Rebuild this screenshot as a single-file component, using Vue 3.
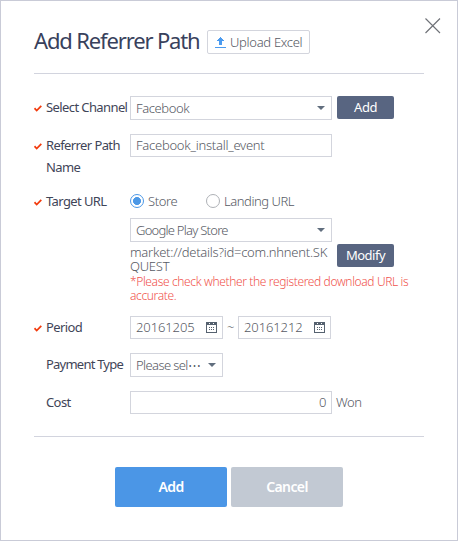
<script setup>
import { ref } from 'vue'

const targetType = ref('store')
const dates = ['20161205', '20161212']
const calendarDots = [5, 7].flatMap((y) => [3, 5, 7].map((x) => ({ x, y })))
</script>

<template>
  <section class="dialog">
    <button class="close" aria-label="Close">
      <svg width="16" height="16" viewBox="0 0 16 16"><path d="M.5.5l14.5 14.5M15 .5L.5 15" fill="none" stroke="#6f7278" stroke-width="1.15" /></svg>
    </button>

    <header class="head">
      <h1>Add Referrer Path</h1>
      <button class="upload">
        <svg width="11" height="11" viewBox="0 0 11 11" shape-rendering="crispEdges" fill="#4c9bef">
          <path d="M5 0h1v1h1v1h1v1h1v1H7v4H4V4H2V3h1V2h1V1h1z" />
          <path d="M0 10h11v1H0z" />
        </svg>
        <span>Upload Excel</span>
      </button>
    </header>

    <form class="form" @submit.prevent>
      <div class="row channel">
        <div class="label required">
          <svg class="check" width="8" height="7" viewBox="0 0 8 7"><path d="M.5 3.2L2.7 5.5 7.3.8" /></svg>
          <span>Select Channel</span>
        </div>
        <div class="select wide"><span>Facebook</span><i class="caret"></i></div>
        <button class="small">Add</button>
      </div>

      <div class="row path">
        <div class="label required">
          <svg class="check" width="8" height="7" viewBox="0 0 8 7"><path d="M.5 3.2L2.7 5.5 7.3.8" /></svg>
          <span>Referrer Path<br>Name</span>
        </div>
        <div class="input wide underscored"><span>Facebook_install_event</span></div>
      </div>

      <div class="row target">
        <div class="label required">
          <svg class="check" width="8" height="7" viewBox="0 0 8 7"><path d="M.5 3.2L2.7 5.5 7.3.8" /></svg>
          <span>Target URL</span>
        </div>
        <div class="target-body">
          <div class="radios">
            <label class="radio" :class="{ on: targetType === 'store' }" @click="targetType = 'store'"><i></i><span>Store</span></label>
            <label class="radio landing" :class="{ on: targetType === 'landing' }" @click="targetType = 'landing'"><i></i><span>Landing URL</span></label>
          </div>
          <div class="select wide store"><span>Google Play Store</span><i class="caret"></i></div>
          <div class="url-line">
            <p class="url">market://details?id=com.nhnent.SK<br>QUEST</p>
            <button class="small modify">Modify</button>
          </div>
          <p class="warning">*Please check whether the registered download URL is<br>accurate.</p>
        </div>
      </div>

      <div class="row period">
        <div class="label required">
          <svg class="check" width="8" height="7" viewBox="0 0 8 7"><path d="M.5 3.2L2.7 5.5 7.3.8" /></svg>
          <span>Period</span>
        </div>
        <div class="dates">
          <template v-for="(date, i) in dates" :key="date">
            <span v-if="i" class="tilde">~</span>
            <div class="input date">
              <span>{{ date }}</span>
              <svg width="11" height="11" viewBox="0 0 11 11" shape-rendering="crispEdges" fill="#566270">
                <path fill-rule="evenodd" d="M0 0h11v11H0zM1 3v7h9V3zM3 1v1h1V1zM7 1v1h1V1z" />
                <rect v-for="dot in calendarDots" :key="`${dot.x}-${dot.y}`" :x="dot.x" :y="dot.y" width="1" height="1" />
              </svg>
            </div>
          </template>
        </div>
      </div>

      <div class="row payment">
        <div class="label tight"><span>Payment Type</span></div>
        <div class="select narrow"><span>Please sel<b>⋯</b></span><i class="caret"></i></div>
      </div>

      <div class="row cost">
        <div class="label"><span>Cost</span></div>
        <div class="input wide amount"><span>0</span></div>
        <span class="unit">Won</span>
      </div>
    </form>

    <footer class="actions">
      <button class="primary">Add</button>
      <button class="secondary">Cancel</button>
    </footer>
  </section>
</template>

<style>
body { background: #fff; }
</style>

<style scoped>
* { box-sizing: border-box; }
.dialog {
  position: relative;
  width: 458px;
  height: 541px;
  padding: 29px 33px 0;
  border: 1px solid #c9cbd7;
  background: #fff;
  color: #565963;
  font: 300 13px/14px "Noto Sans", "Open Sans", sans-serif;
  letter-spacing: -0.4px;
  white-space: nowrap;
}
button {
  padding: 0;
  border: 0;
  font: inherit;
  letter-spacing: inherit;
  cursor: pointer;
}
p, h1 { margin: 0; }
.close {
  position: absolute;
  top: 17px;
  right: 16px;
  width: 16px;
  height: 16px;
  background: none;
}
.close svg { display: block; }
.head {
  display: flex;
  height: 44px;
  border-bottom: 1px solid #d2d4de;
}
h1 {
  width: 173px;
  color: #38415c;
  font-size: 22px;
  font-weight: 400;
  line-height: 20px;
  letter-spacing: -1.15px;
}
.upload {
  display: flex;
  align-items: center;
  gap: 4px;
  width: 103px;
  height: 24px;
  padding: 0 0 1px 7px;
  border: 1px solid #d3d5dd;
  border-radius: 2px;
  background: #fff;
  color: #565963;
  letter-spacing: -0.3px;
}
.upload svg { margin-top: 2px; }
.form {
  height: 363px;
  padding-top: 22px;
  border-bottom: 1px solid #d2d4de;
}
.row { display: flex; align-items: flex-start; }
.label {
  display: flex;
  flex: none;
  width: 96px;
  padding-left: 12px;
  color: #3f4558;
  font-weight: 400;
  line-height: 22px;
  letter-spacing: -0.6px;
}
.label.tight { letter-spacing: -0.78px; }
.label.required { padding-left: 0; }
.check {
  flex: none;
  margin: 9px 4px 0 0;
  fill: none;
  stroke: #f23a0c;
  stroke-width: 1.7;
}
.select, .input {
  display: flex;
  align-items: center;
  justify-content: space-between;
  border: 1px solid #d3d5dd;
  padding: 0 6px 0 5px;
  background: #fff;
}
.select { height: 24px; }
.input { height: 23px; }
.input span { padding-bottom: 1px; }
.wide { width: 202px; }
.narrow { width: 93px; }
.caret {
  border: 4px solid transparent;
  border-top-color: #616e7e;
  border-bottom-width: 0;
}
.small {
  width: 57px;
  height: 23px;
  margin-left: 5px;
  padding-bottom: 1px;
  border-radius: 2px;
  background: #586581;
  color: #fff;
  font-weight: 400;
  letter-spacing: -0.5px;
}
.channel { height: 38px; }
.underscored { letter-spacing: -0.25px; }
.path { height: 56px; }
.target { height: 126px; }
.target-body { width: 294px; padding-top: 1px; }
.radios { display: flex; height: 27px; padding-top: 3px; }
.radio { display: flex; width: 76px; height: 14px; }
.radio i {
  display: block;
  flex: none;
  width: 14px;
  height: 14px;
  margin-right: 4px;
  border: 1px solid #aeb1b6;
  border-radius: 50%;
}
.radio.on i {
  border-color: #4c98e6;
  background: radial-gradient(circle, #4c98e6 3.7px, transparent 4.3px);
}
.landing { letter-spacing: -0.45px; }
.store { letter-spacing: -0.75px; }
.url-line { display: flex; height: 31px; }
.url { width: 202px; padding-top: 3px; letter-spacing: -0.25px; }
.modify { margin-top: 2px; }
.warning { color: #f0524b; font-size: 12px; letter-spacing: -0.37px; padding-top: 2px; }
.period { height: 37px; }
.dates { display: flex; }
.date { width: 93px; padding-right: 5px; letter-spacing: -0.1px; }
.tilde { width: 15px; padding-top: 4px; text-align: center; }
.payment { height: 38px; }
.narrow span { letter-spacing: -0.6px; }
.select b { font-weight: 300; letter-spacing: 0; }
.amount { justify-content: flex-end; padding-right: 5px; }
.unit { margin-left: 4px; line-height: 23px; }
.actions {
  display: flex;
  justify-content: center;
  gap: 4px;
  padding-top: 30px;
}
.actions button {
  width: 112px;
  height: 40px;
  border-radius: 2px;
  color: #fff;
  font-size: 14px;
  font-weight: 600;
  letter-spacing: -0.6px;
}
.actions .primary { background: #4b96e6; }
.actions .secondary { background: #c2c9d3; }
</style>
